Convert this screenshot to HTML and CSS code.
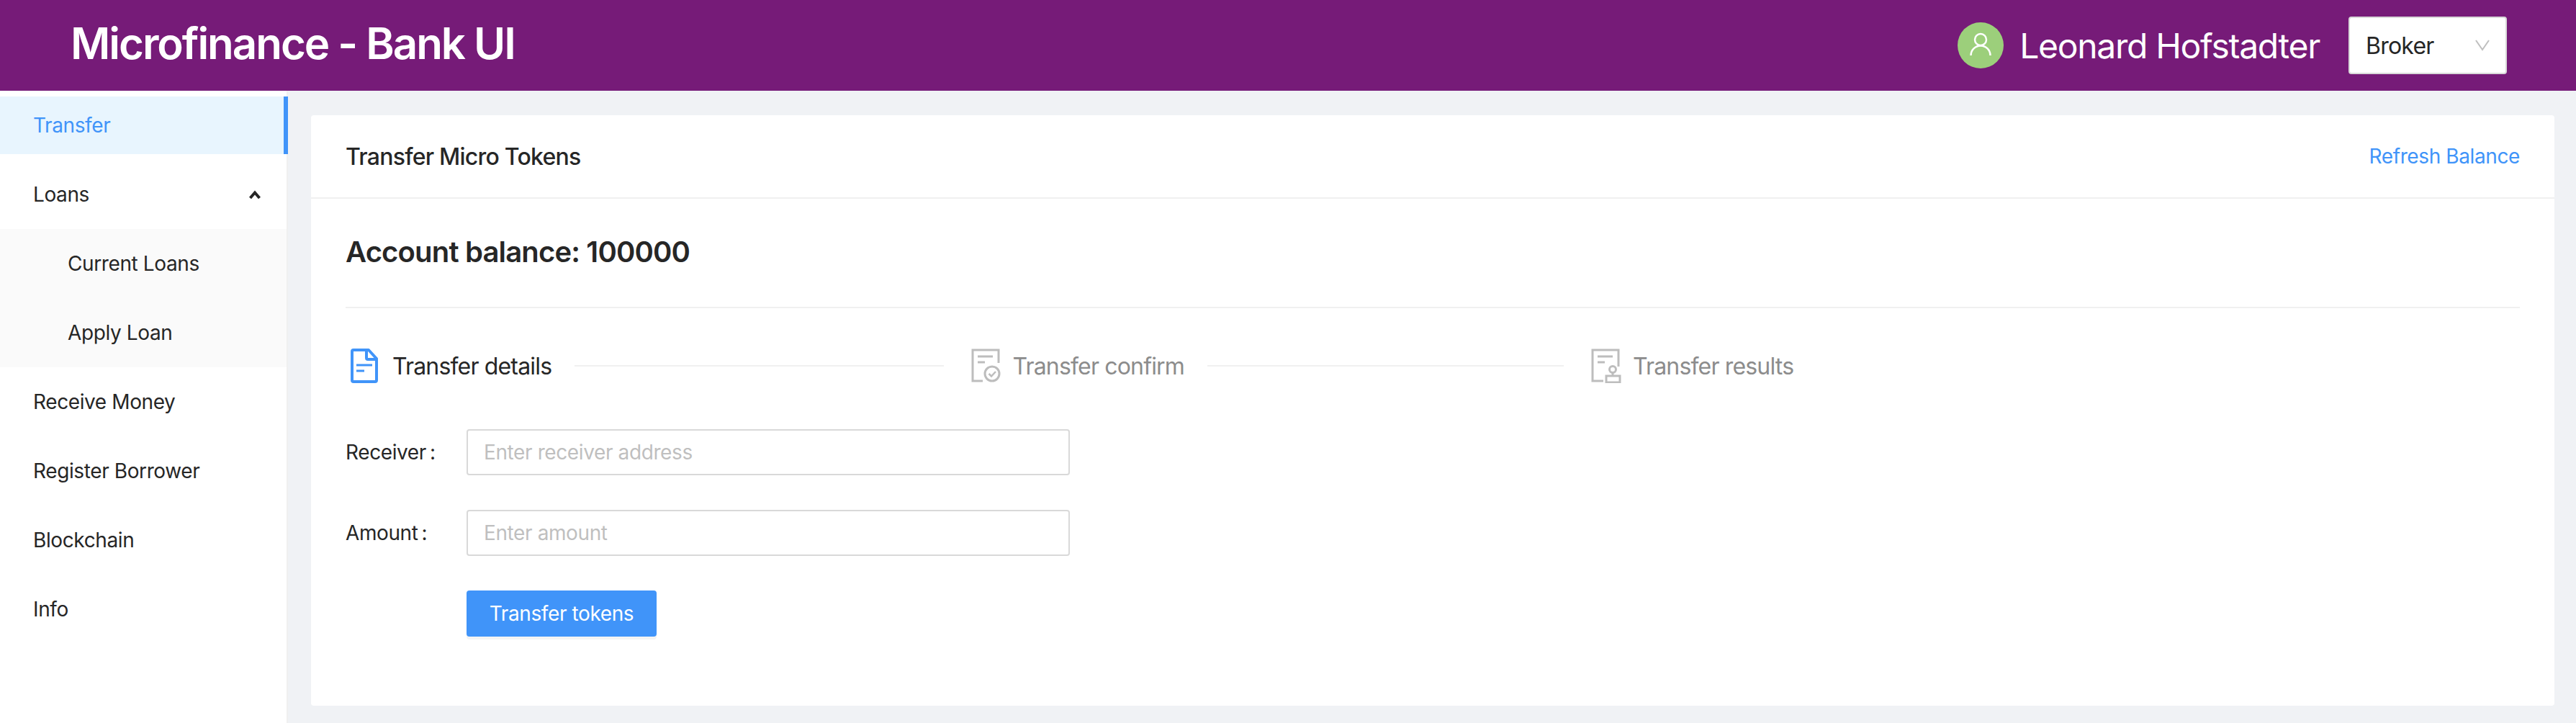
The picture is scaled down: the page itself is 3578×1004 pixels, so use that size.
FILE: index.html
```html
<!DOCTYPE html>
<html lang="en">
<head>
<meta charset="utf-8">
<title>Microfinance - Bank UI</title>
<link rel="stylesheet" href="styles.css">
</head>
<body>
<div class="app">
  <header class="topbar">
    <h1 class="brand">Microfinance - Bank UI</h1>
    <div class="account">
      <span class="avatar">
        <svg viewBox="0 0 64 64" width="64" height="64" fill="none" stroke="#fff" stroke-width="2.500">
          <circle cx="32" cy="24" r="8"/>
          <path d="M18.500 46a13.500 13.500 0 0 1 27 0"/>
        </svg>
      </span>
      <span class="user-name">Leonard Hofstadter</span>
      <div class="role-select">
        <span>Broker</span>
        <svg viewBox="0 0 20 16" width="20" height="16" fill="none" stroke="#bfbfbf" stroke-width="2"><path d="M1 1l9 13 9-13"/></svg>
      </div>
    </div>
  </header>
  <div class="body-row">
    <nav class="sidebar">
      <ul class="menu">
        <li class="menu-item selected">Transfer</li>
        <li class="menu-item has-caret">Loans
          <svg viewBox="0 0 16 12" width="16" height="12" fill="none" stroke="#262626" stroke-width="4"><path d="M1.500 11l6.500-7.500 6.500 7.500"/></svg>
        </li>
        <li class="submenu">
          <ul>
            <li class="menu-item sub">Current Loans</li>
            <li class="menu-item sub">Apply Loan</li>
          </ul>
        </li>
        <li class="menu-item">Receive Money</li>
        <li class="menu-item">Register Borrower</li>
        <li class="menu-item">Blockchain</li>
        <li class="menu-item">Info</li>
      </ul>
    </nav>
    <main class="content">
      <section class="card">
        <div class="card-head">
          <h2 class="card-title">Transfer Micro Tokens</h2>
          <a class="refresh">Refresh Balance</a>
        </div>
        <div class="card-body">
          <h3 class="balance">Account balance: 100000</h3>
          <hr class="divider">
          <ol class="steps">
            <li class="step active">
              <svg class="step-icon" viewBox="0 0 38 48" width="38" height="48">
                <path d="M2 4a2 2 0 0 1 2-2h21l11 12v30a2 2 0 0 1-2 2H4a2 2 0 0 1-2-2z" fill="none" stroke="#4094f9" stroke-width="4" stroke-linejoin="round"/>
                <path d="M22 2v11a2 2 0 0 0 2 2h12" fill="none" stroke="#4094f9" stroke-width="4"/>
                <path d="M8 23h22M8 31h11" stroke="#4094f9" stroke-width="3"/>
              </svg>
              <span class="step-label">Transfer details</span>
              <span class="step-line"></span>
            </li>
            <li class="step">
              <svg class="step-icon" viewBox="0 0 42 48" width="42" height="48">
                <path d="M16 45H2V2h36v18" fill="none" stroke="#bdbdbd" stroke-width="3"/>
                <path d="M9 11h21M9 19h10" stroke="#bdbdbd" stroke-width="3"/>
                <circle cx="29" cy="35" r="10" fill="#fff" stroke="#bdbdbd" stroke-width="3"/>
                <path d="M24.500 35l3.500 3.500 6-6.500" fill="none" stroke="#bdbdbd" stroke-width="2.500"/>
              </svg>
              <span class="step-label">Transfer confirm</span>
              <span class="step-line"></span>
            </li>
            <li class="step last">
              <svg class="step-icon" viewBox="0 0 42 48" width="42" height="48">
                <path d="M17 45H2V2h36v23" fill="none" stroke="#bdbdbd" stroke-width="3"/>
                <path d="M9 11h21M9 19h10" stroke="#bdbdbd" stroke-width="3"/>
                <circle cx="30" cy="29" r="4.500" fill="none" stroke="#bdbdbd" stroke-width="3"/>
                <path d="M30 33v4" stroke="#bdbdbd" stroke-width="3"/>
                <rect x="21" y="38" width="19" height="9" fill="none" stroke="#bdbdbd" stroke-width="3"/>
              </svg>
              <span class="step-label">Transfer results</span>
            </li>
          </ol>
          <form class="form">
            <label class="field-label" for="receiver">Receiver<i class="colon">:</i></label>
            <input class="field-input" id="receiver" placeholder="Enter receiver address">
            <label class="field-label" for="amount">Amount<i class="colon">:</i></label>
            <input class="field-input" id="amount" placeholder="Enter amount">
            <button class="submit" type="button">Transfer tokens</button>
          </form>
        </div>
      </section>
    </main>
  </div>
</div>
</body>
</html>
```
FILE: styles.css
```css
* { box-sizing: border-box; }
html, body { margin: 0; padding: 0; height: 100%; overflow: hidden; }
body { font-family: Inter, "Liberation Sans", sans-serif; font-size: 28px; letter-spacing: -0.014em; color: #262626; background: #f0f2f5; }
ul, ol { list-style: none; margin: 0; padding: 0; }
.app { display: flex; flex-direction: column; height: 100vh; }

.topbar { flex: 0 0 126px; display: flex; align-items: center; justify-content: space-between; background: #761b78; padding: 0 96px 0 98px; color: #fff; }
.brand { margin: 0; font-size: 60px; line-height: 60px; font-weight: 600; position: relative; top: -3px; letter-spacing: -0.034em; }
.account { display: flex; align-items: center; }
.avatar { width: 64px; height: 64px; border-radius: 50%; background: #9ccf7b; display: block; margin-right: 22px; }
.avatar svg { display: block; }
.user-name { font-size: 48px; letter-spacing: -0.027em; margin-right: 40px; }
.role-select { width: 220px; height: 80px; display: flex; align-items: center; justify-content: space-between; background: #fff; border: 2px solid #d9d9d9; border-radius: 4px; padding: 0 22px; color: #262626; font-size: 32px; letter-spacing: -0.024em; }

.body-row { flex: 1; display: flex; min-height: 0; }
.sidebar { flex: 0 0 400px; min-width: 0; background: #fff; border-right: 2px solid #f0f0f0; }
.menu { padding-top: 8px; width: 400px; }
.menu-item { height: 80px; line-height: 80px; padding-left: 46px; margin-bottom: 16px; color: #262626; }
.menu-item.selected { background: #e8f5fe; color: #4094f9; border-right: 6px solid #4094f9; }
.menu-item.has-caret { display: flex; align-items: center; justify-content: space-between; padding-right: 36px; width: 398px; margin-bottom: 8px; }
.submenu { background: #fafafa; width: 398px; padding: 8px 0; margin-bottom: 8px; }
.menu-item.sub { padding-left: 94px; }
.menu-item.sub:last-child { margin-bottom: 0; }

.content { flex: 1; min-width: 0; padding: 34px 30px 24px 32px; }
.card { background: #fff; height: 100%; border-radius: 4px; display: flex; flex-direction: column; }
.card-head { flex: 0 0 116px; border-bottom: 2px solid #f0f0f0; display: flex; align-items: center; justify-content: space-between; padding: 0 48px; }
.card-title { margin: 0; font-size: 32px; font-weight: 500; letter-spacing: -0.024em; }
.refresh { color: #4094f9; font-size: 28px; }
.card-body { padding: 44px 48px 0; }
.balance { margin: 0; font-size: 40px; line-height: 60px; font-weight: 600; letter-spacing: -0.021em; }
.divider { border: 0; height: 2px; background: #f0f0f0; margin: 46px 0 56px; }

.steps { display: flex; height: 48px; padding-left: 7px; margin-bottom: 64px; }
.step { flex: 0 0 861.5px; display: flex; align-items: center; padding-right: 38px; }
.step.last { flex: 1; }
.step-icon { flex: none; margin-right: 16px; }
.step.active .step-icon { margin-right: 20px; }
.step-label { font-size: 32px; letter-spacing: -0.026em; color: #8c8c8c; white-space: nowrap; }
.step.active .step-label { color: #262626; }
.step-line { flex: 1; height: 2px; background: #f0f0f0; margin-left: 32px; }

.form { display: grid; grid-template-columns: 168px 838px; row-gap: 48px; align-items: center; }
.field-label { font-size: 28px; }
.colon { font-style: normal; margin-left: 5px; }
.field-input { height: 64px; border: 2px solid #d9d9d9; border-radius: 4px; padding: 0 22px; font: inherit; letter-spacing: inherit; color: #262626; outline: 0; width: 100%; }
.field-input::placeholder { color: #bfbfbf; opacity: 1; }
.submit { grid-column: 2; justify-self: start; height: 64px; width: 264px; background: #4094f9; color: #fff; border: 0; border-radius: 4px; font: inherit; letter-spacing: inherit; box-shadow: 0 4px 0 rgba(0,0,0,.045); }
```
